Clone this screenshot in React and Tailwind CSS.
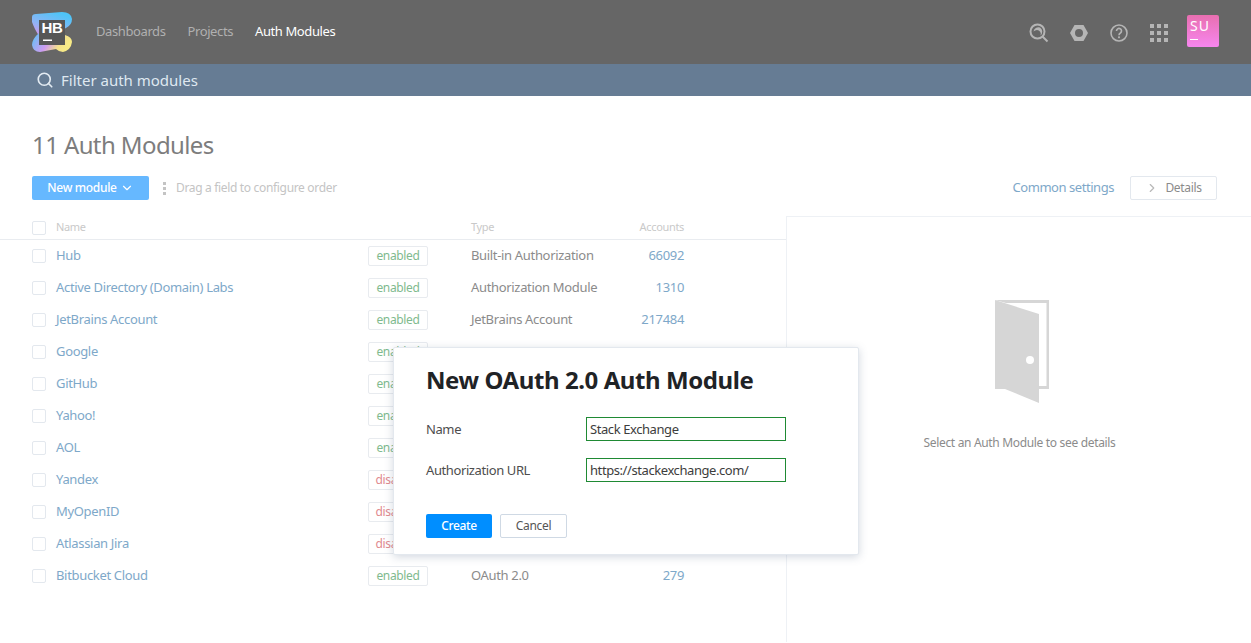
import React from 'react';
import { Search, ChevronDown, ChevronRight } from 'lucide-react';

const modules = [
  { name: 'Hub', status: 'enabled', type: 'Built-in Authorization', accounts: '66092' },
  { name: 'Active Directory (Domain) Labs', status: 'enabled', type: 'Authorization Module', accounts: '1310' },
  { name: 'JetBrains Account', status: 'enabled', type: 'JetBrains Account', accounts: '217484' },
  { name: 'Google', status: 'enabled' },
  { name: 'GitHub', status: 'enabled' },
  { name: 'Yahoo!', status: 'enabled' },
  { name: 'AOL', status: 'enabled' },
  { name: 'Yandex', status: 'disabled' },
  { name: 'MyOpenID', status: 'disabled' },
  { name: 'Atlassian Jira', status: 'disabled' },
  { name: 'Bitbucket Cloud', status: 'enabled', type: 'OAuth 2.0', accounts: '279' },
];

const Logo = () => (
  <svg width="40" height="40" viewBox="0 0 40 40" className="shrink-0">
    <defs>
      <linearGradient id="hbTop" x1="0" y1="1" x2="0.6" y2="0">
        <stop offset="0" stopColor="#e08fe8" />
        <stop offset="0.45" stopColor="#8fb4f5" />
        <stop offset="1" stopColor="#4fc4f7" />
      </linearGradient>
      <linearGradient id="hbBottom" x1="0" y1="0" x2="1" y2="0.3">
        <stop offset="0" stopColor="#55c6f6" />
        <stop offset="0.5" stopColor="#cf9bf0" />
        <stop offset="0.8" stopColor="#f3e08c" />
        <stop offset="1" stopColor="#f7ea86" />
      </linearGradient>
    </defs>
    <path d="M0 5 Q0 2 4 2 L30 0 Q39 0 40 7 Q40 13 34 16 L26 20 L7 24 Q2 16 0 10 Z" fill="url(#hbTop)" />
    <path d="M7 21 L33 23 Q40 25 40 30 Q39 38 31 40 Q27 40 24 37 L8 40 Q1 40 0 33 Q0 27 7 21 Z" fill="url(#hbBottom)" />
    <rect x="7" y="8" width="26" height="25" fill="#565656" />
    <text x="9.5" y="20.5" fontSize="15" fontWeight="700" fill="#fff" fontFamily="Liberation Sans, sans-serif">HB</text>
    <rect x="11" y="27.5" width="9" height="1.5" fill="#fff" />
  </svg>
);

const TopIcons = () => (
  <div className="flex items-center gap-[20px] mt-[2px]">
    <svg width="20" height="20" viewBox="0 0 20 20" fill="none">
      <circle cx="8.5" cy="8.5" r="7" stroke="#b5b5b5" strokeWidth="2" />
      <path d="M13.5 13.5 L18.5 18.5" stroke="#b5b5b5" strokeWidth="2" />
      <path d="M4.5 8.5 A5 5 0 0 1 11 4.5 A5 5 0 0 1 11.5 12.5 A4 4 0 0 0 8 7 Q6 7 4.5 8.5 Z" fill="#b5b5b5" />
    </svg>
    <svg width="20" height="20" viewBox="0 0 20 20">
      <path fillRule="evenodd" d="M5.5 2 H14.5 L19 10 L14.5 18 H5.5 L1 10 Z M10 6 A4 4 0 1 0 10 14 A4 4 0 1 0 10 6 Z" fill="#b5b5b5" />
    </svg>
    <svg width="20" height="20" viewBox="0 0 20 20" fill="none">
      <circle cx="10" cy="10" r="8" stroke="#b5b5b5" strokeWidth="1.6" />
      <path d="M7.5 8 A2.5 2.5 0 1 1 11.4 10 Q10 10.8 10 12.2" stroke="#b5b5b5" strokeWidth="1.6" />
      <rect x="9.1" y="13.4" width="1.8" height="1.8" fill="#b5b5b5" />
    </svg>
    <div className="grid grid-cols-3 gap-[3px] ml-[1px]">
      {Array.from({ length: 9 }).map((_, i) => (
        <span key={i} className="w-[4px] h-[4px] bg-[#b5b5b5]" />
      ))}
    </div>
  </div>
);

const Checkbox = () => (
  <span className="w-[14px] h-[14px] rounded-[2px] border border-[#e3e8ee] bg-white shrink-0" />
);

const Row = ({ item }) => (
  <div className="flex items-center h-[32px] pl-[32px]">
    <Checkbox />
    <span className="ml-[10px] w-[312px] text-[#7ea8c9] text-[13px] whitespace-nowrap">{item.name}</span>
    <span
      className={`w-[60px] h-[20px] flex items-center justify-center rounded-[2px] border border-[#e8ebef] text-[12px] ${
        item.status === 'enabled' ? 'text-[#7fba8e]' : 'text-[#df8a8f]'
      }`}
    >
      {item.status}
    </span>
    <span className="ml-[43px] w-[150px] text-[#8b8b8b] text-[13px] whitespace-nowrap">{item.type}</span>
    <span className="w-[63px] text-right text-[#7ea8c9] text-[13px]">{item.accounts}</span>
  </div>
);

const Field = ({ label, value }) => (
  <div className="flex items-center">
    <span className="w-[160px] text-[13px] text-[#4d4d4d] pt-[1px] tracking-[-0.4px]">{label}</span>
    <input
      readOnly
      value={value}
      className="w-[200px] h-[24px] px-[3px] border border-[#1f8a34] text-[13px] text-[#3d3d3d] tracking-[-0.42px] outline-none bg-white"
    />
  </div>
);

export default function App() {
  return (
    <div className="relative h-[643px] w-[1251px] overflow-hidden bg-white font-['Noto_Sans',sans-serif] tracking-[-0.33px]">
      <header className="flex items-center h-[64px] bg-[#666666] pl-[32px] pr-[32px]">
        <Logo />
        <nav className="flex items-center ml-[24px] gap-[22px] text-[13px] tracking-[-0.4px]">
          <span className="text-[#b0b0b0]">Dashboards</span>
          <span className="text-[#b0b0b0]">Projects</span>
          <span className="text-white">Auth Modules</span>
        </nav>
        <div className="ml-auto flex items-center gap-[19px]">
          <TopIcons />
          <div className="relative w-[32px] h-[32px] mb-[2px] rounded-[2px] bg-gradient-to-b from-[#e86fb0] to-[#f786ef] text-white text-[14px] leading-none pl-[3px] pt-[4px] tracking-[1px]">
            SU
            <span className="absolute left-[3px] bottom-[7px] w-[8px] h-[1px] bg-white" />
          </div>
        </div>
      </header>

      <div className="flex items-center h-[32px] bg-[#667c94] pl-[36px]">
        <Search size={18} color="#e3ebf2" strokeWidth={2.2} />
        <span className="ml-[7px] pt-[1px] text-[15px] tracking-normal text-[#dfe8f0]">Filter auth modules</span>
      </div>

      <main className="pt-[32px]">
        <h1 className="pl-[32px] text-[24px] leading-[36px] -mt-[1px] mb-[1px] tracking-[-0.6px] text-[#7d7d7d] font-normal">11 Auth Modules</h1>
        <div className="flex items-center mt-[13px] pl-[32px] pr-[34px] h-[24px]">
          <button className="flex items-center justify-center w-[117px] h-[24px] rounded-[2px] bg-[#66b8ff] text-white text-[12px] font-medium">
            New module
            <ChevronDown size={14} className="ml-[3px]" />
          </button>
          <span className="ml-[14px] flex flex-col gap-[2px]">
            <span className="w-[3px] h-[3px] bg-[#c4c4c4]" />
            <span className="w-[3px] h-[3px] bg-[#c4c4c4]" />
            <span className="w-[3px] h-[3px] bg-[#c4c4c4]" />
          </span>
          <span className="ml-[10px] text-[12px] text-[#c4c4c4]">Drag a field to configure order</span>
          <span className="ml-auto text-[13px] tracking-[-0.45px] text-[#7ea8c9]">Common settings</span>
          <button className="ml-[16px] flex items-center justify-center w-[87px] h-[24px] rounded-[2px] border border-[#e3e8ee] text-[12px] text-[#8b8b8b]">
            <ChevronRight size={14} color="#b8b8b8" className="mr-[6px]" />
            Details
          </button>
        </div>

        <div className="flex mt-[16px] h-[426px]">
          <div className="w-[786px] shrink-0">
            <div className="flex items-center h-[23px] pl-[32px] border-b border-[#e9ecf0] box-content">
              <Checkbox />
              <span className="ml-[10px] w-[415px] text-[11px] text-[#c9c9c9]">Name</span>
              <span className="w-[150px] text-[11px] text-[#c9c9c9]">Type</span>
              <span className="w-[63px] text-right text-[11px] text-[#c9c9c9]">Accounts</span>
            </div>
            {modules.map((item) => (
              <Row key={item.name} item={item} />
            ))}
          </div>
          <aside className="flex-1 border-l border-t border-[#eef1f5] flex flex-col items-center pt-[83px]">
            <svg width="56" height="104" viewBox="0 0 56 104" className="ml-[5px]">
              <path
                fillRule="evenodd"
                d="M1 0 H55 V89 H44 V86 H52.5 V3 H12 Z"
                fill="#d6d6d6"
              />
              <path d="M1 0 L45 14 V103 L11 89 H1 Z" fill="#d6d6d6" />
              <circle cx="36" cy="60" r="4" fill="#fff" />
            </svg>
            <span className="mt-[30px] ml-[1px] text-[12px] text-[#8b8b8b]">Select an Auth Module to see details</span>
          </aside>
        </div>
      </main>

      <div className="absolute left-[393px] top-[347px] w-[466px] h-[208px] rounded-[2px] bg-white border border-[#e3e8ee] shadow-[0_2px_8px_rgba(80,100,130,0.25)] pt-[17px] pl-[32px]">
        <h2 className="text-[24px] leading-[30px] font-bold tracking-[-0.42px] text-[#1f2326]">New OAuth 2.0 Auth Module</h2>
        <div className="mt-[22px] flex flex-col gap-[17px]">
          <Field label="Name" value="Stack Exchange" />
          <Field label="Authorization URL" value="https://stackexchange.com/" />
        </div>
        <div className="mt-[32px] flex gap-[8px]">
          <button className="w-[66px] h-[24px] rounded-[2px] bg-[#008eff] text-white text-[12px] font-medium">Create</button>
          <button className="w-[67px] h-[24px] rounded-[2px] border border-[#cfd9e4] text-[12px] text-[#555]">Cancel</button>
        </div>
      </div>
    </div>
  );
}
